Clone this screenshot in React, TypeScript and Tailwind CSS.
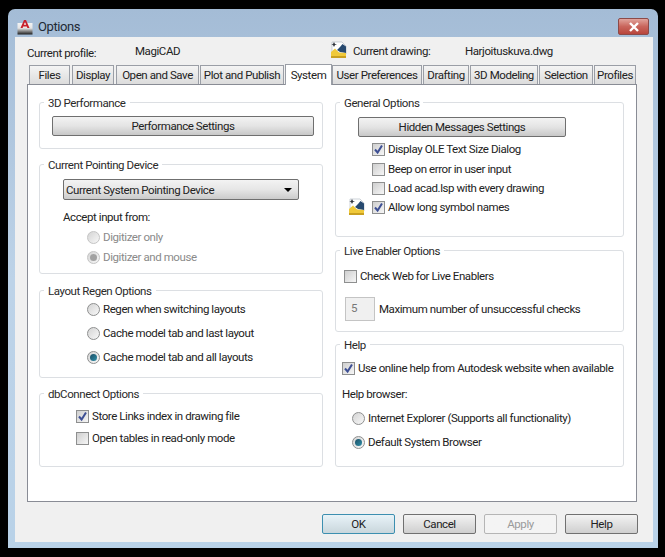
import type { ReactNode } from 'react';

const Check = ({ checked = false }: { checked?: boolean }) => (
  <span className="flex w-[13px] h-[13px] shrink-0 items-center justify-center border border-[#8e8f8f] bg-gradient-to-br from-[#cfcfcf] to-[#f6f6f6]">
    {checked && (
      <svg width="11" height="11" viewBox="0 0 11 11">
        <path d="M2 5.5 L4.6 8.5 L9 1.5" fill="none" stroke="#3d4f94" strokeWidth="2" />
      </svg>
    )}
  </span>
);

const Radio = ({ on = false, disabled = false }: { on?: boolean; disabled?: boolean }) => (
  <span
    className={`flex w-[13px] h-[13px] shrink-0 items-center justify-center rounded-full border bg-gradient-to-br from-[#d4d4d4] to-[#f8f8f8] ${
      disabled ? 'border-[#c4c4c4]' : 'border-[#8e8f8f]'
    }`}
  >
    {on && (
      <span className={`w-[7px] h-[7px] rounded-full ${disabled ? 'bg-[#a2a2a2]' : 'bg-gradient-to-br from-[#1c4f66] to-[#2f8fa8]'}`} />
    )}
  </span>
);

const Group = ({ title, h, className = '', children }: { title: string; h: string; className?: string; children: ReactNode }) => (
  <fieldset className={`block min-w-0 rounded-[3px] border border-[#dcdfe3] ${h} ${className}`}>
    <legend className="ml-[4px] px-[4px] h-[14px] text-[11.5px] leading-[16px] text-[#2a2a2a]">{title}</legend>
    {children}
  </fieldset>
);

const Label = ({ muted = false, children }: { muted?: boolean; children: ReactNode }) => (
  <span className={`mt-[2px] ${muted ? 'text-[#8a8a8a]' : ''}`}>{children}</span>
);

const Row = ({ ml, mt, children }: { ml: string; mt: string; children: ReactNode }) => (
  <div className={`flex items-center h-[16px] gap-[3px] text-[11.5px] whitespace-nowrap ${ml} ${mt}`}>{children}</div>
);

const GrayButton = ({ label, w, ml, mt }: { label: string; w: string; ml: string; mt: string }) => (
  <div
    className={`flex h-[20px] items-center justify-center rounded-[2px] border border-[#6f6f6f] bg-gradient-to-b from-[#f3f3f3] via-[#e4e4e4] to-[#c8c8c8] pt-[2px] text-[11.5px] text-[#222] ${w} ${ml} ${mt}`}
  >
    {label}
  </div>
);

const DrawingIcon = () => (
  <svg width="16" height="18" viewBox="0 0 16 18" className="shrink-0">
    <path d="M1 1 H11 L15 5 V13 L1 11 Z" fill="#fff" stroke="#9aa4b0" strokeWidth="0.5" />
    <path d="M6 9 L9 6 L11.5 3 L15 5.5 V12 L9 11 Z" fill="#27496f" />
    <path d="M0 11 L4 7.5 L8 11.5 L15 12 V17 H0 Z" fill="#f0c93a" />
    <path d="M0 17 H15 V15 H0 Z" fill="#c9a020" />
    <path d="M3 1 L4 3 L6 3.4 L4 4 L3 6 L2 4 L0.4 3.4 L2 3 Z" fill="#30343c" />
  </svg>
);

const AppIcon = () => (
  <svg width="16" height="16" viewBox="0 0 16 16" className="shrink-0">
    <defs>
      <linearGradient id="app-icon-bg" x1="0" y1="0" x2="0" y2="1">
        <stop offset="0" stopColor="#f4f4f4" />
        <stop offset="0.45" stopColor="#e4e4e4" />
        <stop offset="1" stopColor="#1c1c1c" />
      </linearGradient>
    </defs>
    <rect x="0.5" y="4" width="15" height="11.5" fill="url(#app-icon-bg)" />
    <path d="M3.5 9 L7 1 H9 L12.5 9 H10.4 L9.8 7.4 H6.2 L5.6 9 Z M6.8 5.8 H9.2 L8 3 Z" fill="#c8202c" fillRule="evenodd" />
  </svg>
);

const tabs = [
  { label: 'Files', w: 'w-[41px]', ml: 'ml-[2px]' },
  { label: 'Display', w: 'w-[42px]', ml: 'ml-[2px]' },
  { label: 'Open and Save', w: 'w-[83px]', ml: 'ml-[2px]' },
  { label: 'Plot and Publish', w: 'w-[84px]', ml: 'ml-px' },
  { label: 'System', w: 'w-[47px]', ml: 'ml-px', active: true },
  { label: 'User Preferences', w: 'w-[90px]', ml: 'ml-0' },
  { label: 'Drafting', w: 'w-[46px]', ml: 'ml-px' },
  { label: '3D Modeling', w: 'w-[68px]', ml: 'ml-px' },
  { label: 'Selection', w: 'w-[54px]', ml: 'ml-px' },
  { label: 'Profiles', w: 'w-[42px]', ml: 'ml-px' },
];

const footerButtons = [
  { label: 'OK', cls: 'border-[#3c8fb0] text-[#222] from-[#e8f3f8] to-[#c9d6dc]' },
  { label: 'Cancel', cls: 'border-[#707070] text-[#222] from-[#f3f3f3] to-[#cfcfcf]' },
  { label: 'Apply', cls: 'border-[#b5b5b5] text-[#9a9a9a] from-[#f4f4f4] to-[#f4f4f4]' },
  { label: 'Help', cls: 'border-[#707070] text-[#222] from-[#f3f3f3] to-[#cfcfcf]' },
];

export default function App() {
  return (
    <div className="w-[665px] h-[557px] overflow-hidden bg-black pt-[9px] pl-[8px] font-['Roboto',Arial,sans-serif] tracking-[-0.42px] text-[#222]">
      <div className="w-[650px] h-[539px] rounded-t-[7px] bg-gradient-to-b from-[#a4bcd6] via-[#bdd3e8] to-[#b9d2e8] pl-[7px]">
        {/* Title bar */}
        <div className="flex h-[28px] items-start justify-between pr-[9px]">
          <div className="flex items-center gap-[5px] pl-[2px] pt-[9px]">
            <AppIcon />
            <span className="text-[13px] leading-[18px] text-[#1f2a35]">Options</span>
          </div>
          <div className="mt-[9px] flex h-[17px] w-[31px] items-center justify-center rounded-[2px] border border-[#8c4a48] bg-gradient-to-b from-[#e0a39c] via-[#c9655c] to-[#b8453c]">
            <svg width="12" height="10" viewBox="0 0 12 10">
              <path d="M2 1 L10 9 M10 1 L2 9" stroke="#fff" strokeWidth="2.4" />
            </svg>
          </div>
        </div>

        {/* Client area */}
        <div className="w-[638px] h-[505px] bg-[#f0f0f0] pl-[12px]">
          <div className="flex h-[27px] items-start text-[11.5px]">
            <span className="mt-[8px] w-[108px]">Current profile:</span>
            <span className="mt-[6px] w-[196px]">MagiCAD</span>
            <span className="mt-[4px] w-[22px]"><DrawingIcon /></span>
            <span className="mt-[6px] w-[112px]">Current drawing:</span>
            <span className="mt-[6px]">Harjoituskuva.dwg</span>
          </div>

          {/* Tabs */}
          <div className="relative z-10 flex h-[20px] items-end text-[11.5px]">
            {tabs.map((t) => (
              <div
                key={t.label}
                className={`flex items-center justify-center border border-[#9a9ea6] pt-px whitespace-nowrap ${t.w} ${t.ml} ${
                  t.active
                    ? 'h-[21px] -mb-px border-b-0 bg-white'
                    : 'h-[19px] border-b-0 bg-gradient-to-b from-[#f4f4f4] to-[#dcdcdc]'
                }`}
              >
                {t.label}
              </div>
            ))}
          </div>

          {/* Panel */}
          <div className="flex w-[610px] h-[418px] gap-[12px] border border-[#898c95] bg-white pl-[11px] pt-[10px]">
            <div className="w-[284px]">
              <Group title="3D Performance" h="h-[54px]">
                <GrayButton label="Performance Settings" w="w-[262px]" ml="ml-[12px]" mt="mt-[7px]" />
              </Group>
              <Group title="Current Pointing Device" h="h-[117px]" className="mt-[8px]">
                <div className="ml-[23px] mt-[8px] flex h-[21px] w-[236px] items-center justify-between rounded-[2px] border border-[#6f6f6f] bg-gradient-to-b from-[#f3f3f3] via-[#e6e6e6] to-[#cbcbcb] pl-[2px] pr-[6px] text-[11.5px]">
                  <Label>Current System Pointing Device</Label>
                  <span className="h-0 w-0 border-x-[4px] border-t-[4px] border-x-transparent border-t-black" />
                </div>
                <Row ml="ml-[23px]" mt="mt-[9px]"><Label>Accept input from:</Label></Row>
                <Row ml="ml-[47px]" mt="mt-[4px]">
                  <Radio disabled />
                  <Label muted>Digitizer only</Label>
                </Row>
                <Row ml="ml-[47px]" mt="mt-[4px]">
                  <Radio on disabled />
                  <Label muted>Digitizer and mouse</Label>
                </Row>
              </Group>
              <Group title="Layout Regen Options" h="h-[95px]" className="mt-[9px]">
                <Row ml="ml-[47px]" mt="mt-[4px]"><Radio /><Label>Regen when switching layouts</Label></Row>
                <Row ml="ml-[47px]" mt="mt-[8px]"><Radio /><Label>Cache model tab and last layout</Label></Row>
                <Row ml="ml-[47px]" mt="mt-[8px]"><Radio on /><Label>Cache model tab and all layouts</Label></Row>
              </Group>
              <Group title="dbConnect Options" h="h-[81px]" className="mt-[8px]">
                <Row ml="ml-[36px]" mt="mt-[8px]"><Check checked /><Label>Store Links index in drawing file</Label></Row>
                <Row ml="ml-[36px]" mt="mt-[6px]"><Check /><Label>Open tables in read-only mode</Label></Row>
              </Group>
            </div>

            <div className="w-[289px]">
              <Group title="General Options" h="h-[142px]">
                <GrayButton label="Hidden Messages Settings" w="w-[208px]" ml="ml-[22px]" mt="mt-[8px]" />
                <Row ml="ml-[36px]" mt="mt-[4px]"><Check checked /><Label>Display OLE Text Size Dialog</Label></Row>
                <Row ml="ml-[36px]" mt="mt-[4px]"><Check /><Label>Beep on error in user input</Label></Row>
                <Row ml="ml-[36px]" mt="mt-[3px]"><Check /><Label>Load acad.lsp with every drawing</Label></Row>
                <div className="ml-[13px] mt-[2px] flex h-[18px] items-center text-[11.5px]">
                  <DrawingIcon />
                  <span className="ml-[7px]"><Check checked /></span>
                  <span className="ml-[3px] mt-[2px]">Allow long symbol names</span>
                </div>
              </Group>
              <Group title="Live Enabler Options" h="h-[89px]" className="mt-[6px]">
                <Row ml="ml-[8px]" mt="mt-[11px]"><Check /><Label>Check Web for Live Enablers</Label></Row>
                <div className="ml-[9px] mt-[13px] flex items-center text-[11.5px]">
                  <span className="flex h-[24px] w-[30px] items-center border border-[#c4c4c4] bg-[#f0f0f0] pl-[5px] text-[#777]">5</span>
                  <span className="ml-[4px] mt-[2px]">Maximum number of unsuccessful checks</span>
                </div>
              </Group>
              <Group title="Help" h="h-[130px]" className="mt-[5px]">
                <Row ml="ml-[6px]" mt="mt-[9px]"><Check checked /><Label>Use online help from Autodesk website when available</Label></Row>
                <Row ml="ml-[6px]" mt="mt-[10px]"><Label>Help browser:</Label></Row>
                <Row ml="ml-[16px]" mt="mt-[8px]"><Radio /><Label>Internet Explorer (Supports all functionality)</Label></Row>
                <Row ml="ml-[16px]" mt="mt-[8px]"><Radio on /><Label>Default System Browser</Label></Row>
              </Group>
            </div>
          </div>

          {/* Footer buttons */}
          <div className="mt-[12px] flex gap-[8px] pl-[295px]">
            {footerButtons.map((b) => (
              <div
                key={b.label}
                className={`flex h-[20px] w-[73px] items-center justify-center rounded-[2px] border bg-gradient-to-b pt-px text-[11.5px] ${b.cls}`}
              >
                {b.label}
              </div>
            ))}
          </div>
        </div>
      </div>
    </div>
  );
}
